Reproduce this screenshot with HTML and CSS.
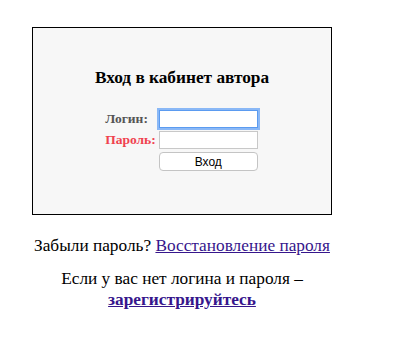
FILE: index.html
```html
<!DOCTYPE html>
<html lang="ru">
<head>
  <meta charset="UTF-8" />
  <meta name="viewport" content="width=device-width, initial-scale=1.0"/>
  <title>Вход в кабинет автора</title>
  <link rel="stylesheet" href="styles.css">
</head>
<body>
  <div class="page">
    <div class="login-box">
      <h3>Вход в кабинет автора</h3>
      <form class="login-form">
        <label class="lbl" for="login">Логин:</label>
        <input type="text" id="login" class="field focused" />

        <label class="lbl error" for="pass">Пароль:</label>
        <input type="password" id="pass" class="field" />

        <span></span>
        <button type="submit">Вход</button>
      </form>
    </div>

    <p class="forgot">Забыли пароль? <a href="#">Восстановление пароля</a></p>
    <p class="register">Если у вас нет логина и пароля –<br><a href="#"><b>зарегистрируйтесь</b></a></p>
  </div>
</body>
</html>
```

FILE: styles.css
```css
body {
  margin: 8px;
  font-family: 'Liberation Serif', 'Times New Roman', serif;
  background-color: #fff;
  color: #000;
}
.page {
  width: 300px;
  margin-left: 24px;
  padding-top: 19px;
}
.login-box {
  box-sizing: border-box;
  height: 188px;
  border: 1px solid #000;
  background-color: #f7f7f7;
  padding-top: 40px;
}
h3 {
  margin: 0 0 22px;
  text-align: center;
  font-size: 17.3px;
}
.login-form {
  display: grid;
  grid-template-columns: auto auto;
  justify-content: center;
  align-items: center;
  column-gap: 3px;
  row-gap: 3px;
  padding-right: 1px;
}
.lbl {
  font-size: 13.5px;
  font-weight: bold;
  color: #555;
}
.lbl.error {
  color: #f0424f;
}
.field {
  box-sizing: border-box;
  width: 99px;
  height: 18px;
  margin: 0;
  padding: 1px 3px;
  border: 1px solid #c8c8c8;
  background: #fff;
}
.field.focused {
  border-color: #5b9bf0;
  box-shadow: 0 0 0 2px #8ab8f6;
  outline: none;
}
button {
  box-sizing: border-box;
  width: 99px;
  height: 19px;
  margin: 0;
  padding: 0;
  border: 1px solid #c4c4c4;
  border-radius: 4px;
  background: #fff;
  font-family: 'Liberation Sans', Arial, sans-serif;
  font-size: 12px;
  color: #000;
}
p {
  text-align: center;
  font-size: 17.3px;
  margin: 0;
}
.forgot {
  margin-top: 21px;
}
.register {
  margin-top: 12px;
  line-height: 21px;
}
a {
  color: #36168c;
}
```
